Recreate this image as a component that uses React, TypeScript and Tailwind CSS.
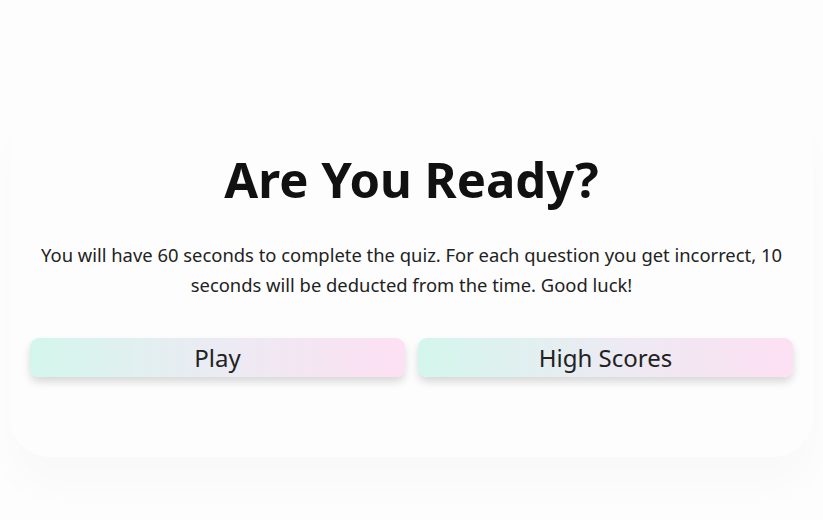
export default function App() {
  return (
    <div
      className="min-h-[520px] w-full bg-[#fdfdfd] flex flex-col items-center"
      style={{ fontFamily: "'Noto Sans', 'Open Sans', sans-serif" }}
    >
      {/* faint card behind the content */}
      <div className="mt-[100px] w-[803px] rounded-[40px] shadow-[0_30px_40px_rgba(0,0,0,0.02)] px-5 pt-[55px] pb-[80px] flex flex-col items-center">
        <h1 className="text-[49px] leading-none font-bold text-[#111]">Are You Ready?</h1>
        <p className="mt-[36px] text-[18.4px] leading-[30px] text-[#222] text-center w-[780px]">
          You will have 60 seconds to complete the quiz. For each question you get incorrect, 10 seconds will be
          deducted from the time. Good luck!
        </p>
        <div className="mt-[38px] w-full grid grid-cols-2 gap-[13px]">
          <button className="h-[39px] rounded-[9px] bg-gradient-to-r from-[#d3f6ec] via-[#ebebf3] to-[#fde0f3] shadow-[0_5px_8px_rgba(0,0,0,0.15)] text-[24px] text-[#222]">
            Play
          </button>
          <button className="h-[39px] rounded-[9px] bg-gradient-to-r from-[#d3f6ec] via-[#ebebf3] to-[#fde0f3] shadow-[0_5px_8px_rgba(0,0,0,0.15)] text-[24px] text-[#222]">
            High Scores
          </button>
        </div>
      </div>
    </div>
  );
}
